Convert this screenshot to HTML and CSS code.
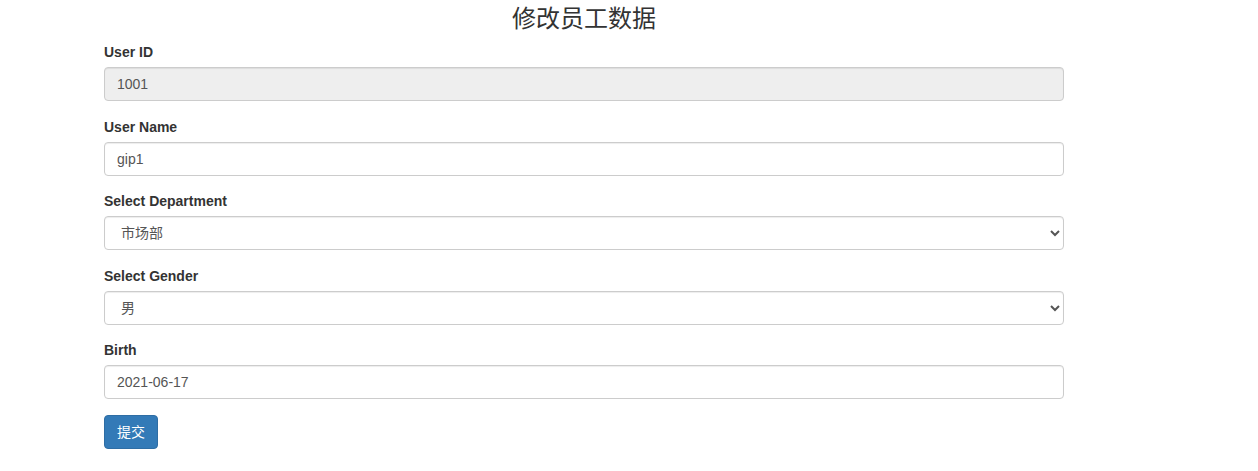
FILE: index.html
```html
<!DOCTYPE html>
<html lang="zh-CN">
<head>
<meta charset="utf-8">
<title>修改员工数据</title>
<link rel="stylesheet" href="styles.css">
</head>
<body>
<div class="wrap">
  <h3 class="title">修改员工数据</h3>
  <form class="form">
    <div class="form-group">
      <label class="label" for="uid">User ID</label>
      <input class="form-control" id="uid" type="text" value="1001" disabled>
    </div>
    <div class="form-group">
      <label class="label" for="uname">User Name</label>
      <input class="form-control" id="uname" type="text" value="gip1">
    </div>
    <div class="form-group">
      <label class="label" for="dept">Select Department</label>
      <select class="form-control" id="dept">
        <option selected>市场部</option>
        <option>开发部</option>
      </select>
    </div>
    <div class="form-group">
      <label class="label" for="gender">Select Gender</label>
      <select class="form-control" id="gender">
        <option selected>男</option>
        <option>女</option>
      </select>
    </div>
    <div class="form-group">
      <label class="label" for="birth">Birth</label>
      <input class="form-control" id="birth" type="text" value="2021-06-17">
    </div>
    <button class="btn" type="button">提交</button>
  </form>
</div>
</body>
</html>
```
FILE: styles.css
```css
* { box-sizing: border-box; }
html, body { margin: 0; padding: 0; }
body {
  font-family: "Liberation Sans", Arial, "Noto Sans CJK SC", sans-serif;
  font-size: 14px;
  line-height: 1.42857143;
  color: #333;
  background: #fff;
}
.wrap {
  width: 960px;
  margin-left: 104px;
}
.title {
  margin: 6px 0 10px;
  font-size: 24px;
  font-weight: 400;
  line-height: 1.1;
  text-align: center;
  font-family: "Liberation Sans", "Noto Sans CJK SC", sans-serif;
  color: #333;
}
.form-group { margin-bottom: 15.5px; }
.label {
  display: inline-block;
  max-width: 100%;
  margin-bottom: 5px;
  font-weight: 700;
}
.form-control {
  display: block;
  width: 100%;
  height: 34px;
  padding: 6px 12px;
  font-family: inherit;
  font-size: 14px;
  line-height: 1.42857143;
  color: #555;
  background-color: #fff;
  border: 1px solid #ccc;
  border-radius: 4px;
  box-shadow: inset 0 1px 1px rgba(0,0,0,.075);
  margin: 0;
}
.form-control[disabled] {
  background-color: #eee;
  opacity: 1;
}
.btn {
  display: inline-block;
  padding: 6px 12px;
  font-family: inherit;
  font-size: 14px;
  line-height: 1.42857143;
  color: #fff;
  background-color: #337ab7;
  border: 1px solid #2e6da4;
  border-radius: 4px;
  cursor: pointer;
  margin: 0;
}
```
